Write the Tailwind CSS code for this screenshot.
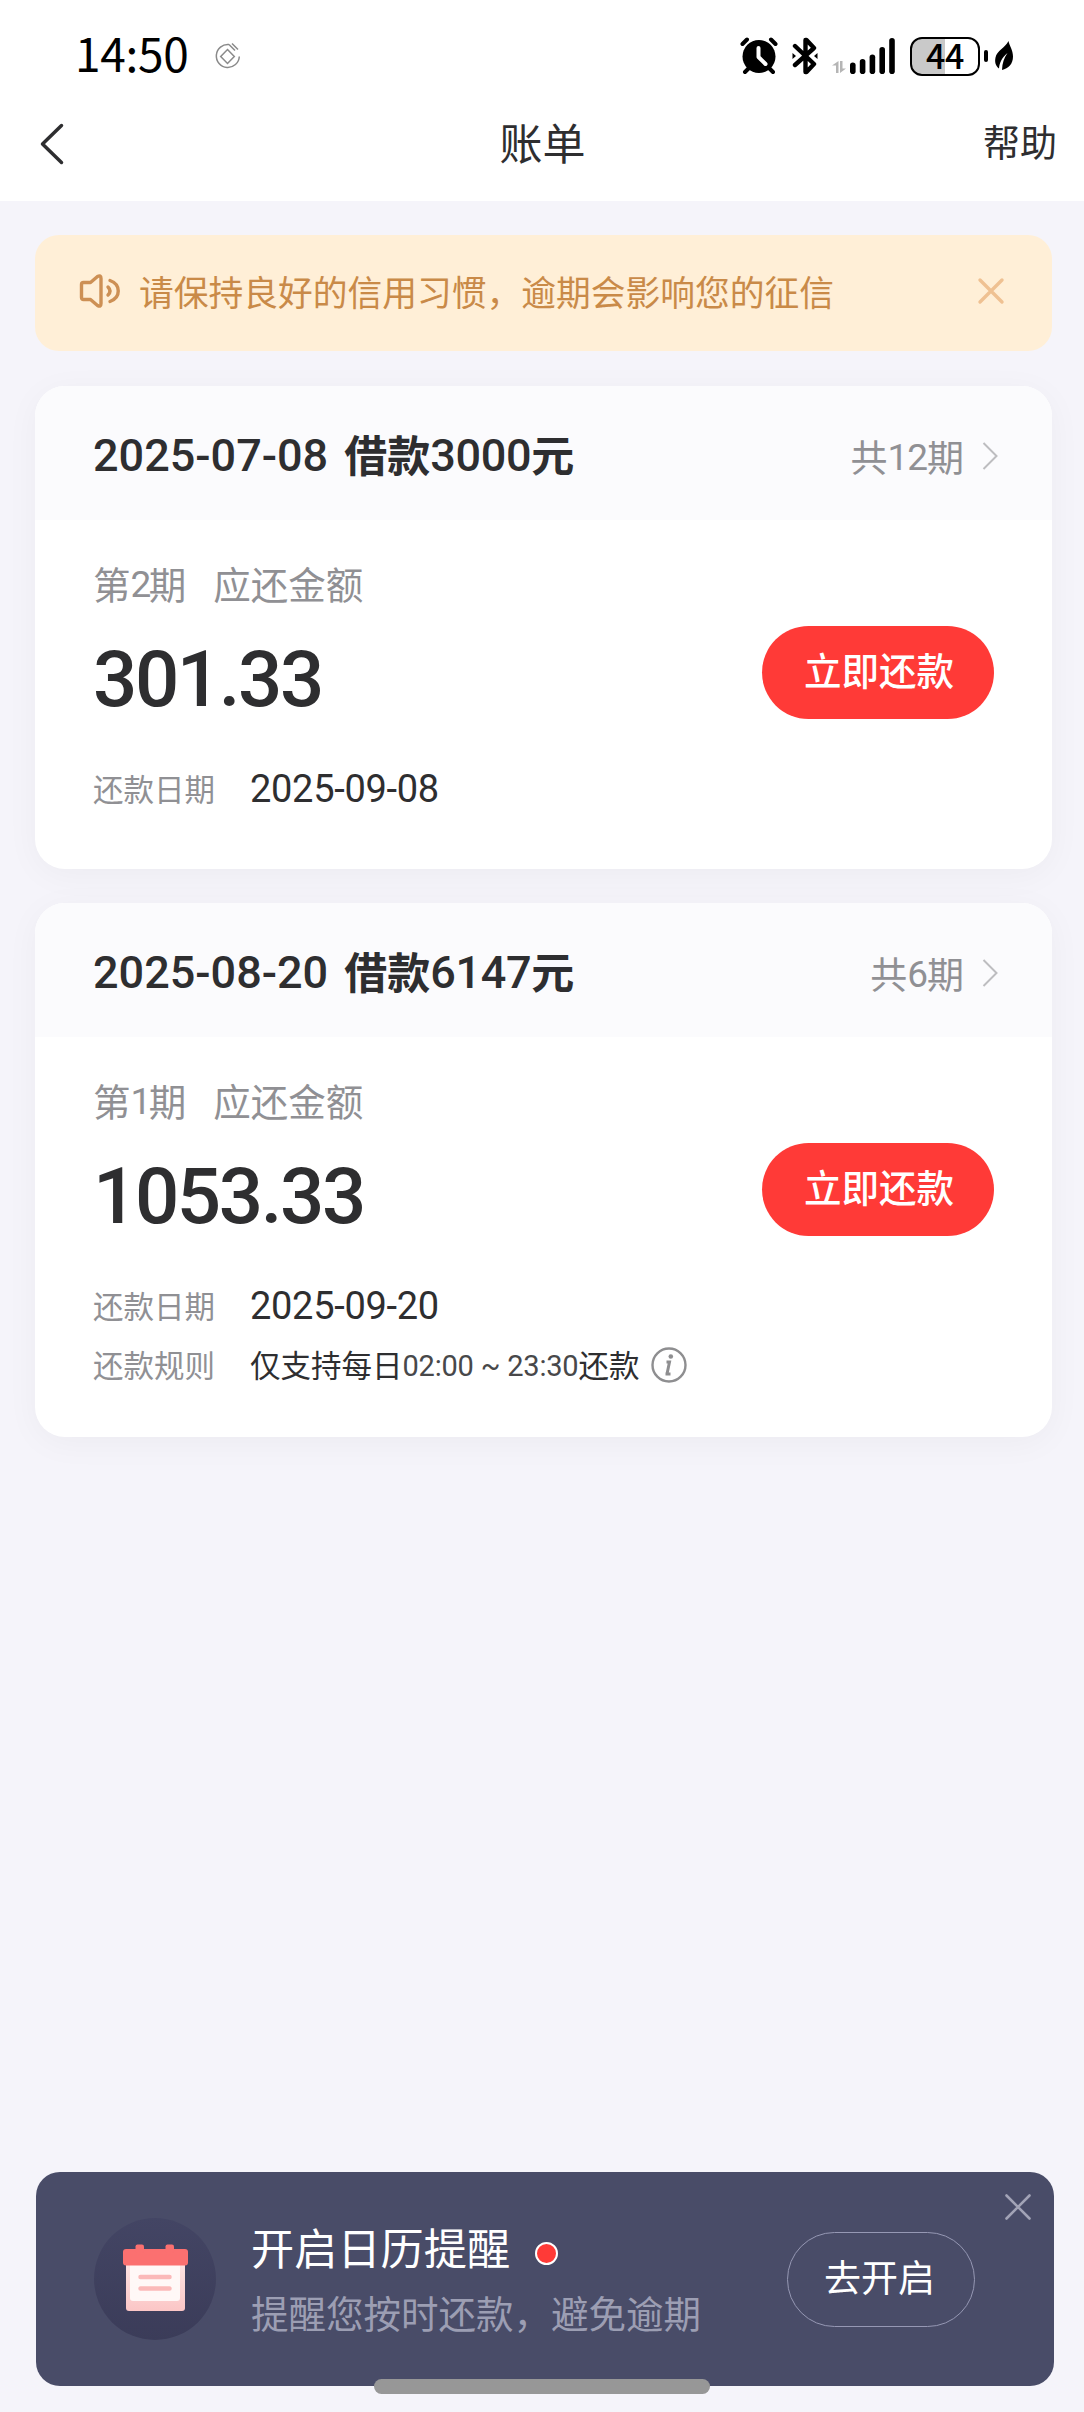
<!DOCTYPE html>
<html lang="zh-CN">

<head>
    <meta charset="UTF-8">
    <meta name="viewport" content="width=device-width, initial-scale=1.0">
    <title>账单</title>
    <script src="https://cdn.jsdelivr.net/npm/@tailwindcss/browser@4"></script>
</head>

<body class="bg-[#f5f4fa] font-['Noto_Sans_CJK_SC',sans-serif] text-[#2e2e30]">
    <div class="relative flex flex-col w-[1084px] h-[2412px] overflow-hidden whitespace-nowrap">

        <!-- Status bar -->
        <div class="flex items-center justify-between h-[112px] pl-[75px] pr-[70px] bg-white text-black shrink-0">
            <div class="flex items-center gap-[27px]">
                <span class="text-[46px] leading-[60px] tracking-[-0.300px] pb-[8px]">14:50</span>
                <svg class="w-[26px] h-[28px]" viewBox="0 0 26 28" fill="none" stroke="#8a8a8a" stroke-width="1.5">
                    <path d="M14 2.5A11.5 11.5 0 1 0 24.3 14.5M14 2.5l6 6M17 1.5l6 6" />
                    <path d="M12.500 7.500l6.800 7-6.800 7-6.800-7z" />
                </svg>
            </div>
            <div class="flex items-center">
                <svg class="w-[38px] h-[38px] mr-[14px]" viewBox="0 0 38 38">
                    <path d="M2.500 7l4.500-4.500M35.500 7L31 2.500M5 35l6-6M33 35l-6-6" stroke="#000" stroke-width="4" stroke-linecap="round" />
                    <circle cx="19" cy="19.500" r="16.500" />
                    <path d="M18.500 11v9l7 7" fill="none" stroke="#fff" stroke-width="4" stroke-linecap="round" stroke-linejoin="round" />
                </svg>
                <svg class="w-[26px] h-[38px] mr-[14px]" viewBox="0 0 26 38" fill="none" stroke="#000" stroke-width="4.400" stroke-linecap="round" stroke-linejoin="round">
                    <path d="M3 9l19 18-7.500 8h-1V3h1L22 11 3 28" />
                    <path d="M.5 16l3.500 3-3.500 3zM25.500 16l-3.500 3 3.500 3z" fill="#000" stroke="none" />
                </svg>
                <svg class="w-[64px] h-[38px] mr-[14px]" viewBox="0 0 64 38">
                    <path d="M6.500 24v12H4v-7.500H0zM8 24h2.500v7.500H14L8 36z" fill="#b5b5b5" />
                    <rect x="18" y="25.500" width="5.600" height="11.500" rx="2.800" />
                    <rect x="27.800" y="22" width="5.600" height="15" rx="2.800" />
                    <rect x="37.600" y="17.500" width="5.600" height="19.500" rx="2.800" />
                    <rect x="47.400" y="10" width="5.600" height="27" rx="2.800" />
                    <rect x="57.200" y="1" width="5.600" height="36" rx="2.800" />
                </svg>
                <div class="flex items-center justify-center w-[70px] h-[39px] pb-[2px] rounded-[12px] border-[2.5px] border-black bg-linear-to-r from-[#c9c9c9] from-50% to-white to-50% text-[34px] leading-[34px] font-medium tracking-[-0.5px]">44</div>
                <div class="w-[4px] h-[12px] ml-[4px] mr-[6px] rounded-full bg-black"></div>
                <svg class="w-[20px] h-[30px]" viewBox="0 0 20 30">
                    <path d="M14.500 0c.8 4.500 4.500 9 4.500 15.500C19 23 14.500 27.500 8 29c.3-7 2-12 5.500-17C8 16.500 5.500 21.500 5 27.500 1.500 25 .5 21 1.500 16.500 3 9.500 11 7 14.500 0z" />
                </svg>
            </div>
        </div>

        <!-- Nav bar -->
        <div class="grid grid-cols-3 items-center h-[89px] pl-[40px] pr-[27px] pb-[26px] bg-white shrink-0">
            <svg class="w-[24px] h-[42px]" viewBox="0 0 24 42" fill="none" stroke="#2e2e30" stroke-width="3.500" stroke-linecap="round" stroke-linejoin="round">
                <path d="M21.500 2.500L2.500 21l19 18.500" />
            </svg>
            <h1 class="text-[43px] leading-[48px] text-center pr-[12px] pb-[6px]">账单</h1>
            <span class="text-[37px] leading-[48px] text-right pb-[5px]">帮助</span>
        </div>

        <!-- Notice -->
        <div class="flex items-center h-[116px] mt-[34px] ml-[35px] mr-[32px] pl-[44px] pr-[47px] pb-1 rounded-[24px] bg-[#ffefd7] text-[#c98a48] shrink-0">
            <svg class="w-[42px] h-[36px] mr-[18px]" viewBox="0 0 42 36" fill="none" stroke="#cd9055" stroke-width="3.400" stroke-linecap="round" stroke-linejoin="round">
                <path d="M4.500 9.500h7l7-6q3.500-2 3.500 2v25q0 4-3.500 2l-7-6h-7q-2 0-2-2v-13q0-2 2-2z" />
                <path d="M29 14q4 4 0 8M31 7.500c11 4 11 17 0 21" />
            </svg>
            <p class="text-[34.750px] leading-[50px]">请保持良好的信用习惯，逾期会影响您的征信</p>
            <svg class="w-[28px] h-[28px] ml-auto" viewBox="0 0 28 28" stroke="#efc192" stroke-width="3.400" stroke-linecap="round">
                <path d="M3 3l22 22M25 3L3 25" />
            </svg>
        </div>

        <!-- Bill: 3000 -->
        <section class="mt-[35px] ml-[35px] mr-[32px] rounded-[30px] bg-white shadow-[0_6px_34px_rgba(0,0,0,0.04)] shrink-0">
            <div class="flex items-center justify-between h-[134px] pl-[58px] pr-[54px] rounded-t-[30px] bg-[#fbfbfd]">
                <h2 class="flex items-center text-[43px] leading-[60px] font-bold">
                    <span class="font-[Roboto] font-medium text-[45px] mr-[16px] pt-[5px]">2025-07-08</span>借款<span class="font-[Roboto] font-medium text-[45px] tracking-[-0.3px] pt-[5px]">3000</span>元
                </h2>
                <div class="flex items-center pt-[5px] text-[37px] leading-[50px] text-[#909094]">
                    共<span class="font-[Roboto] text-[37px] tracking-[-1px] pt-[5px]">12</span>期
                    <svg class="w-[16px] h-[28px] ml-[18px]" viewBox="0 0 16 28" fill="none" stroke="#bdbdc0" stroke-width="2">
                        <path d="M1.500 1l13 13-13 13" />
                    </svg>
                </div>
            </div>
            <div class="px-[58px] pt-[42px] pb-[58px]">
                <div class="flex items-center h-[44px] pb-[3px] text-[37.500px] leading-[44px] text-[#909094]">
                    第<span class="font-[Roboto] text-[37px] tracking-[-2.500px] pt-[5px]">2</span>期<span class="ml-[27px]">应还金额</span>
                </div>
                <div class="flex items-center justify-between h-[93px] mt-5">
                    <span class="font-[Roboto] font-medium text-[78px] leading-[93px] tracking-[-2.400px] pt-[13px]">301.33</span>
                    <button class="w-[232px] h-[93px] pb-[6px] pl-[2px] rounded-full bg-[#ff3a37] text-white text-[37.500px] font-medium">立即还款</button>
                </div>
                <div class="flex items-center h-[44px] mt-[48px]">
                    <span class="w-[157px] pb-[2px] text-[30.500px] leading-[44px] text-[#909094]">还款日期</span>
                    <span class="font-[Roboto] text-[38px] leading-[44px] tracking-[-0.300px]">2025-09-08</span>
                </div>
            </div>
        </section>

        <!-- Bill: 6147 -->
        <section class="mt-[34px] ml-[35px] mr-[32px] rounded-[30px] bg-white shadow-[0_6px_34px_rgba(0,0,0,0.04)] shrink-0">
            <div class="flex items-center justify-between h-[134px] pl-[58px] pr-[54px] rounded-t-[30px] bg-[#fbfbfd]">
                <h2 class="flex items-center text-[43px] leading-[60px] font-bold">
                    <span class="font-[Roboto] font-medium text-[45px] mr-[16px] pt-[5px]">2025-08-20</span>借款<span class="font-[Roboto] font-medium text-[45px] tracking-[-0.3px] pt-[5px]">6147</span>元
                </h2>
                <div class="flex items-center pt-[5px] text-[37px] leading-[50px] text-[#909094]">
                    共<span class="font-[Roboto] text-[37px] tracking-[-1px] pt-[5px]">6</span>期
                    <svg class="w-[16px] h-[28px] ml-[18px]" viewBox="0 0 16 28" fill="none" stroke="#bdbdc0" stroke-width="2">
                        <path d="M1.500 1l13 13-13 13" />
                    </svg>
                </div>
            </div>
            <div class="px-[58px] pt-[42px] pb-[50px]">
                <div class="flex items-center h-[44px] pb-[3px] text-[37.500px] leading-[44px] text-[#909094]">
                    第<span class="font-[Roboto] text-[37px] tracking-[-2.500px] pt-[5px]">1</span>期<span class="ml-[27px]">应还金额</span>
                </div>
                <div class="flex items-center justify-between h-[93px] mt-5">
                    <span class="font-[Roboto] font-medium text-[78px] leading-[93px] tracking-[-2.400px] pt-[13px]">1053.33</span>
                    <button class="w-[232px] h-[93px] pb-[6px] pl-[2px] rounded-full bg-[#ff3a37] text-white text-[37.500px] font-medium">立即还款</button>
                </div>
                <div class="flex items-center h-[44px] mt-[48px]">
                    <span class="w-[157px] pb-[2px] text-[30.500px] leading-[44px] text-[#909094]">还款日期</span>
                    <span class="font-[Roboto] text-[38px] leading-[44px] tracking-[-0.300px]">2025-09-20</span>
                </div>
                <div class="flex items-center h-[44px] mt-[15px] text-[30.500px] leading-[44px]">
                    <span class="w-[157px] pb-[2px] text-[#909094]">还款规则</span>
                    <span class="pb-[2px]">仅支持每日</span><span class="font-[Roboto] text-[29px] tracking-[-0.200px] text-[#48484a] pt-[2px]">02:00 ~ 23:30</span><span class="pb-[2px]">还款</span>
                    <svg class="w-[36px] h-[36px] ml-[12px]" viewBox="0 0 36 36" fill="none" stroke="#8e8e90">
                        <circle cx="18" cy="18" r="16.500" stroke-width="2.400" />
                        <path d="M15.500 15h3L16 27M14.500 27h5" stroke-width="3" />
                        <circle cx="19.800" cy="9.500" r="2.300" fill="#8e8e90" stroke="none" />
                    </svg>
                </div>
            </div>
        </section>

        <!-- Calendar reminder -->
        <div class="relative flex items-center h-[214px] mt-auto mb-[26px] ml-[36px] mr-[30px] pl-[58px] pr-[79px] rounded-[24px] bg-[#494c68] text-white shrink-0">
            <div class="flex items-center justify-center w-[122px] h-[122px] mr-[35px] pb-[2px] rounded-full bg-linear-to-b from-[#434564] to-[#3b3c59]">
                <svg class="w-[66px] h-[68px]" viewBox="0 0 66 68">
                    <defs>
                        <linearGradient id="page" x1="0" y1="0" x2="0" y2="1">
                            <stop offset="0" stop-color="#fde3e2" />
                            <stop offset="1" stop-color="#fbc6c6" />
                        </linearGradient>
                    </defs>
                    <path d="M4 20h59v44q0 3-3 3H7q-3 0-3-3z" fill="url(#page)" />
                    <path d="M8 20h50v34q0 3-3 3H11q-3 0-3-3z" fill="#fff8f7" />
                    <rect x="1" y="5" width="65" height="16.500" rx="3" fill="#fb7070" />
                    <rect x="13.500" y="0.500" width="8.500" height="8" rx="2" fill="#fb7070" />
                    <rect x="43.500" y="0.500" width="8.500" height="8" rx="2" fill="#fb7070" />
                    <path d="M18.500 33h29M18.500 44.500h29" stroke="#fbb9b9" stroke-width="4.500" stroke-linecap="round" />
                </svg>
            </div>
            <div>
                <div class="flex items-center text-[43.200px] leading-[60px]">
                    <span class="pb-[3px]">开启日历提醒</span>
                    <span class="w-[23px] h-[23px] ml-[25px] mt-[11px] rounded-full border-2 border-white bg-[#ff3a37]"></span>
                </div>
                <p class="text-[37.500px] leading-[60px] mt-[3px] text-[#9c9eb3]">提醒您按时还款，避免逾期</p>
            </div>
            <button class="w-[188px] h-[95px] ml-auto pb-1 pr-[3px] rounded-full border border-[#9698b4] text-[37px]">去开启</button>
            <svg class="absolute top-[21px] right-[22px] w-[28px] h-[28px]" viewBox="0 0 28 28" stroke="#a2a3b6" stroke-width="2.600" stroke-linecap="round">
                <path d="M2.500 2.500l23 23M25.500 2.500l-23 23" />
            </svg>
        </div>

        <!-- Gesture bar -->
        <div class="absolute left-[374px] bottom-[18px] w-[336px] h-[15px] rounded-full bg-[#979797]"></div>
    </div>
</body>

</html>
